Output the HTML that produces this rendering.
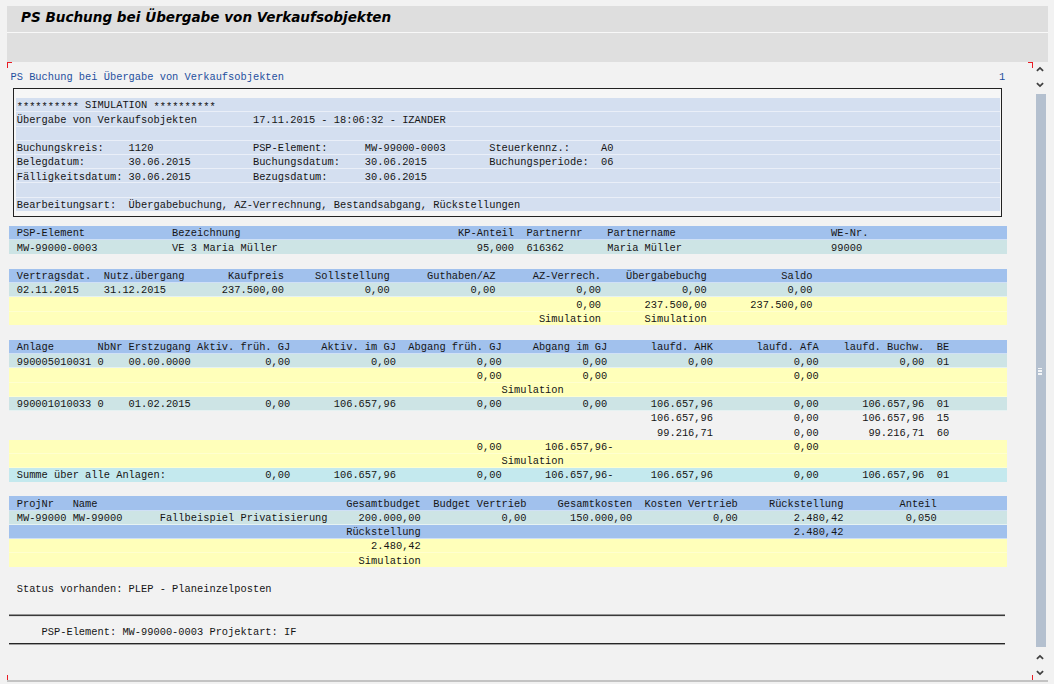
<!DOCTYPE html>
<html lang="de">
<head>
<meta charset="utf-8">
<title>PS Buchung bei Übergabe von Verkaufsobjekten</title>
<style>
html,body{margin:0;padding:0;}
body{width:1054px;height:684px;overflow:hidden;background:#f2f2f2;position:relative;font-family:"Liberation Mono",monospace;}
.bar0{position:absolute;left:7px;top:31px;width:1041px;height:3px;background:#f8f8f8;}
.bar1{position:absolute;left:7px;top:5.6px;width:1041px;height:26.3px;background:#dedede;}
.bar2{position:absolute;left:7px;top:33px;width:1041px;height:28.7px;background:#dfdfdf;}
.title{position:absolute;left:21.3px;top:4.5px;height:24px;line-height:24px;font-family:"DejaVu Sans","Liberation Sans",sans-serif;font-weight:bold;font-style:italic;font-size:14.2px;color:#000;white-space:pre;transform:scaleX(0.956);transform-origin:0 0;}
.r{position:absolute;height:14.23px;line-height:15.3px;font-size:10.3667px;white-space:pre;color:#151515;box-sizing:border-box;border-bottom:1px solid rgba(255,255,255,0.5);overflow:hidden;}
.t{position:relative;top:0.32px;}
.ttl{color:#1f4f9e;border-bottom:0;}
.pl{border-bottom:0;}
.last{border-bottom:0;height:13.5px;}
.box{background:#d4dff0;}
.hd{background:#a1c1ed;}
.nm{background:#cde4e5;}
.yl{background:#ffffba;border-bottom-color:rgba(255,255,255,0.3);}
.sm{background:#c4e9ee;}
.as{position:relative;top:2px;}
.hl{position:absolute;height:1px;background:#222;}
.vl{position:absolute;width:1px;background:#222;}
.rc{position:absolute;width:5px;height:5.5px;box-sizing:border-box;}
.sb{position:absolute;left:1036px;top:93.8px;width:9.7px;height:552.8px;background:#b4c0cf;}
.gr{position:absolute;left:1038.3px;width:4px;height:1.4px;background:#f4f6f8;}
svg{position:absolute;overflow:visible;}
</style>
</head>
<body>
<div class="bar0"></div>
<div class="bar1"></div>
<div class="bar2"></div>
<div class="title">PS Buchung bei Übergabe von Verkaufsobjekten</div>
<div style="position:absolute;left:13.5px;top:88.5px;width:988px;height:128px;background:#f6f6f6"></div>
<div class="r ttl" style="top:69.68px;left:9.30px;width:997.60px;padding-left:1.20px"><div class="t">PS Buchung bei Übergabe von Verkaufsobjekten                                                                                                                   1</div></div>
<div class="r box" style="top:98.13px;left:15.70px;width:983.90px;padding-left:1.02px"><div class="t"><span class="as">**********</span> SIMULATION <span class="as">**********</span></div></div>
<div class="r box" style="top:112.36px;left:15.70px;width:983.90px;padding-left:1.02px"><div class="t">Übergabe von Verkaufsobjekten         17.11.2015 - 18:06:32 - IZANDER</div></div>
<div class="r box" style="top:126.59px;left:15.70px;width:983.90px;padding-left:1.02px"><div class="t"></div></div>
<div class="r box" style="top:140.81px;left:15.70px;width:983.90px;padding-left:1.02px"><div class="t">Buchungskreis:    1120                PSP-Element:      MW-99000-0003       Steuerkennz.:     A0</div></div>
<div class="r box" style="top:155.04px;left:15.70px;width:983.90px;padding-left:1.02px"><div class="t">Belegdatum:       30.06.2015          Buchungsdatum:    30.06.2015          Buchungsperiode:  06</div></div>
<div class="r box" style="top:169.27px;left:15.70px;width:983.90px;padding-left:1.02px"><div class="t">Fälligkeitsdatum: 30.06.2015          Bezugsdatum:      30.06.2015</div></div>
<div class="r box" style="top:183.49px;left:15.70px;width:983.90px;padding-left:1.02px"><div class="t"></div></div>
<div class="r box last" style="top:197.72px;left:15.70px;width:983.90px;padding-left:1.02px"><div class="t">Bearbeitungsart:  Übergabebuchung, AZ-Verrechnung, Bestandsabgang, Rückstellungen</div></div>
<div class="r hd" style="top:226.17px;left:9.30px;width:997.60px;padding-left:1.20px"><div class="t"> PSP-Element              Bezeichnung                                   KP-Anteil  Partnernr    Partnername                         WE-Nr.</div></div>
<div class="r nm last" style="top:240.40px;left:9.30px;width:997.60px;padding-left:1.20px"><div class="t"> MW-99000-0003            VE 3 Maria Müller                                95,000  616362       Maria Müller                        99000</div></div>
<div class="r hd" style="top:268.86px;left:9.30px;width:997.60px;padding-left:1.20px"><div class="t"> Vertragsdat.  Nutz.übergang       Kaufpreis     Sollstellung      Guthaben/AZ      AZ-Verrech.    Übergabebuchg            Saldo</div></div>
<div class="r nm" style="top:283.08px;left:9.30px;width:997.60px;padding-left:1.20px"><div class="t"> 02.11.2015    31.12.2015         237.500,00             0,00             0,00             0,00             0,00             0,00</div></div>
<div class="r yl" style="top:297.31px;left:9.30px;width:997.60px;padding-left:1.20px"><div class="t">                                                                                           0,00       237.500,00       237.500,00</div></div>
<div class="r yl last" style="top:311.54px;left:9.30px;width:997.60px;padding-left:1.20px"><div class="t">                                                                                     Simulation       Simulation</div></div>
<div class="r hd" style="top:339.99px;left:9.30px;width:997.60px;padding-left:1.20px"><div class="t"> Anlage       NbNr Erstzugang Aktiv. früh. GJ     Aktiv. im GJ  Abgang früh. GJ     Abgang im GJ       laufd. AHK       laufd. AfA    laufd. Buchw.  BE</div></div>
<div class="r nm" style="top:354.22px;left:9.30px;width:997.60px;padding-left:1.20px"><div class="t"> 990005010031 0    00.00.0000            0,00             0,00             0,00             0,00             0,00             0,00             0,00  01</div></div>
<div class="r yl" style="top:368.44px;left:9.30px;width:997.60px;padding-left:1.20px"><div class="t">                                                                           0,00             0,00                              0,00</div></div>
<div class="r yl" style="top:382.67px;left:9.30px;width:997.60px;padding-left:1.20px"><div class="t">                                                                               Simulation</div></div>
<div class="r nm" style="top:396.90px;left:9.30px;width:997.60px;padding-left:1.20px"><div class="t"> 990001010033 0    01.02.2015            0,00       106.657,96             0,00             0,00       106.657,96             0,00       106.657,96  01</div></div>
<div class="r pl" style="top:411.12px;left:9.30px;width:997.60px;padding-left:1.20px"><div class="t">                                                                                                       106.657,96             0,00       106.657,96  15</div></div>
<div class="r pl" style="top:425.35px;left:9.30px;width:997.60px;padding-left:1.20px"><div class="t">                                                                                                        99.216,71             0,00        99.216,71  60</div></div>
<div class="r yl" style="top:439.58px;left:9.30px;width:997.60px;padding-left:1.20px"><div class="t">                                                                           0,00       106.657,96-                             0,00</div></div>
<div class="r yl" style="top:453.81px;left:9.30px;width:997.60px;padding-left:1.20px"><div class="t">                                                                               Simulation</div></div>
<div class="r sm last" style="top:468.03px;left:9.30px;width:997.60px;padding-left:1.20px"><div class="t"> Summe über alle Anlagen:                0,00       106.657,96             0,00       106.657,96-      106.657,96             0,00       106.657,96  01</div></div>
<div class="r hd" style="top:496.49px;left:9.30px;width:997.60px;padding-left:1.20px"><div class="t"> ProjNr   Name                                        Gesamtbudget  Budget Vertrieb     Gesamtkosten  Kosten Vertrieb     Rückstellung         Anteil</div></div>
<div class="r nm" style="top:510.71px;left:9.30px;width:997.60px;padding-left:1.20px"><div class="t"> MW-99000 MW-99000      Fallbeispiel Privatisierung     200.000,00             0,00       150.000,00             0,00         2.480,42          0,050</div></div>
<div class="r hd" style="top:524.94px;left:9.30px;width:997.60px;padding-left:1.20px"><div class="t">                                                      Rückstellung                                                            2.480,42</div></div>
<div class="r yl" style="top:539.17px;left:9.30px;width:997.60px;padding-left:1.20px"><div class="t">                                                          2.480,42</div></div>
<div class="r yl last" style="top:553.39px;left:9.30px;width:997.60px;padding-left:1.20px"><div class="t">                                                        Simulation</div></div>
<div class="r pl" style="top:581.85px;left:9.30px;width:997.60px;padding-left:1.20px"><div class="t"> Status vorhanden: PLEP - Planeinzelposten</div></div>
<div class="r pl" style="top:624.53px;left:9.30px;width:997.60px;padding-left:1.20px"><div class="t">     PSP-Element: MW-99000-0003 Projektart: IF</div></div>
<div class="hl" style="top:88px;left:13px;width:989px"></div>
<div class="hl" style="top:216px;left:13px;width:989px"></div>
<div class="vl" style="top:88px;left:13px;height:129px"></div>
<div class="vl" style="top:88px;left:1001px;height:129px"></div>
<svg width="1054" height="40" style="left:0;top:610px" viewBox="0 610 1054 40"><rect x="9" y="614.5" width="996" height="1.6" fill="#3a3a3a"/><rect x="9" y="643" width="996" height="1.4" fill="#262626"/></svg>
<div class="rc" style="left:7px;top:62px;border-left:1.6px solid #ea1c24;border-top:1.6px solid #ea1c24"></div>
<div class="rc" style="left:1028px;top:62px;border-right:1.6px solid #ea1c24;border-top:1.6px solid #ea1c24"></div>
<div class="rc" style="left:7px;top:675.2px;height:6px;border-left:1.6px solid #ea1c24;border-bottom:1.6px solid #ea1c24"></div>
<div class="rc" style="left:1028px;top:675.2px;height:6px;border-right:1.6px solid #ea1c24;border-bottom:1.6px solid #ea1c24"></div>
<div class="hl" style="top:680.3px;left:7px;width:1041px;background:#c3c3c3;height:1.7px"></div>
<div class="sb"></div>
<div class="gr" style="top:367.6px"></div><div class="gr" style="top:370.4px"></div><div class="gr" style="top:373.2px"></div>
<svg width="10" height="6" style="left:1035.1px;top:66px" viewBox="0 0 10 6"><path d="M1.9 4.9 L5 1.9 L8.1 4.9" fill="none" stroke="#404040" stroke-width="1.75"/></svg>
<svg width="10" height="6" style="left:1035.1px;top:82px" viewBox="0 0 10 6"><path d="M1.9 1.1 L5 4.1 L8.1 1.1" fill="none" stroke="#404040" stroke-width="1.75"/></svg>
<svg width="10" height="6" style="left:1035.1px;top:654px" viewBox="0 0 10 6"><path d="M1.9 4.9 L5 1.9 L8.1 4.9" fill="none" stroke="#404040" stroke-width="1.75"/></svg>
<svg width="10" height="6" style="left:1035.1px;top:670px" viewBox="0 0 10 6"><path d="M1.9 1.1 L5 4.1 L8.1 1.1" fill="none" stroke="#404040" stroke-width="1.75"/></svg>
</body>
</html>
